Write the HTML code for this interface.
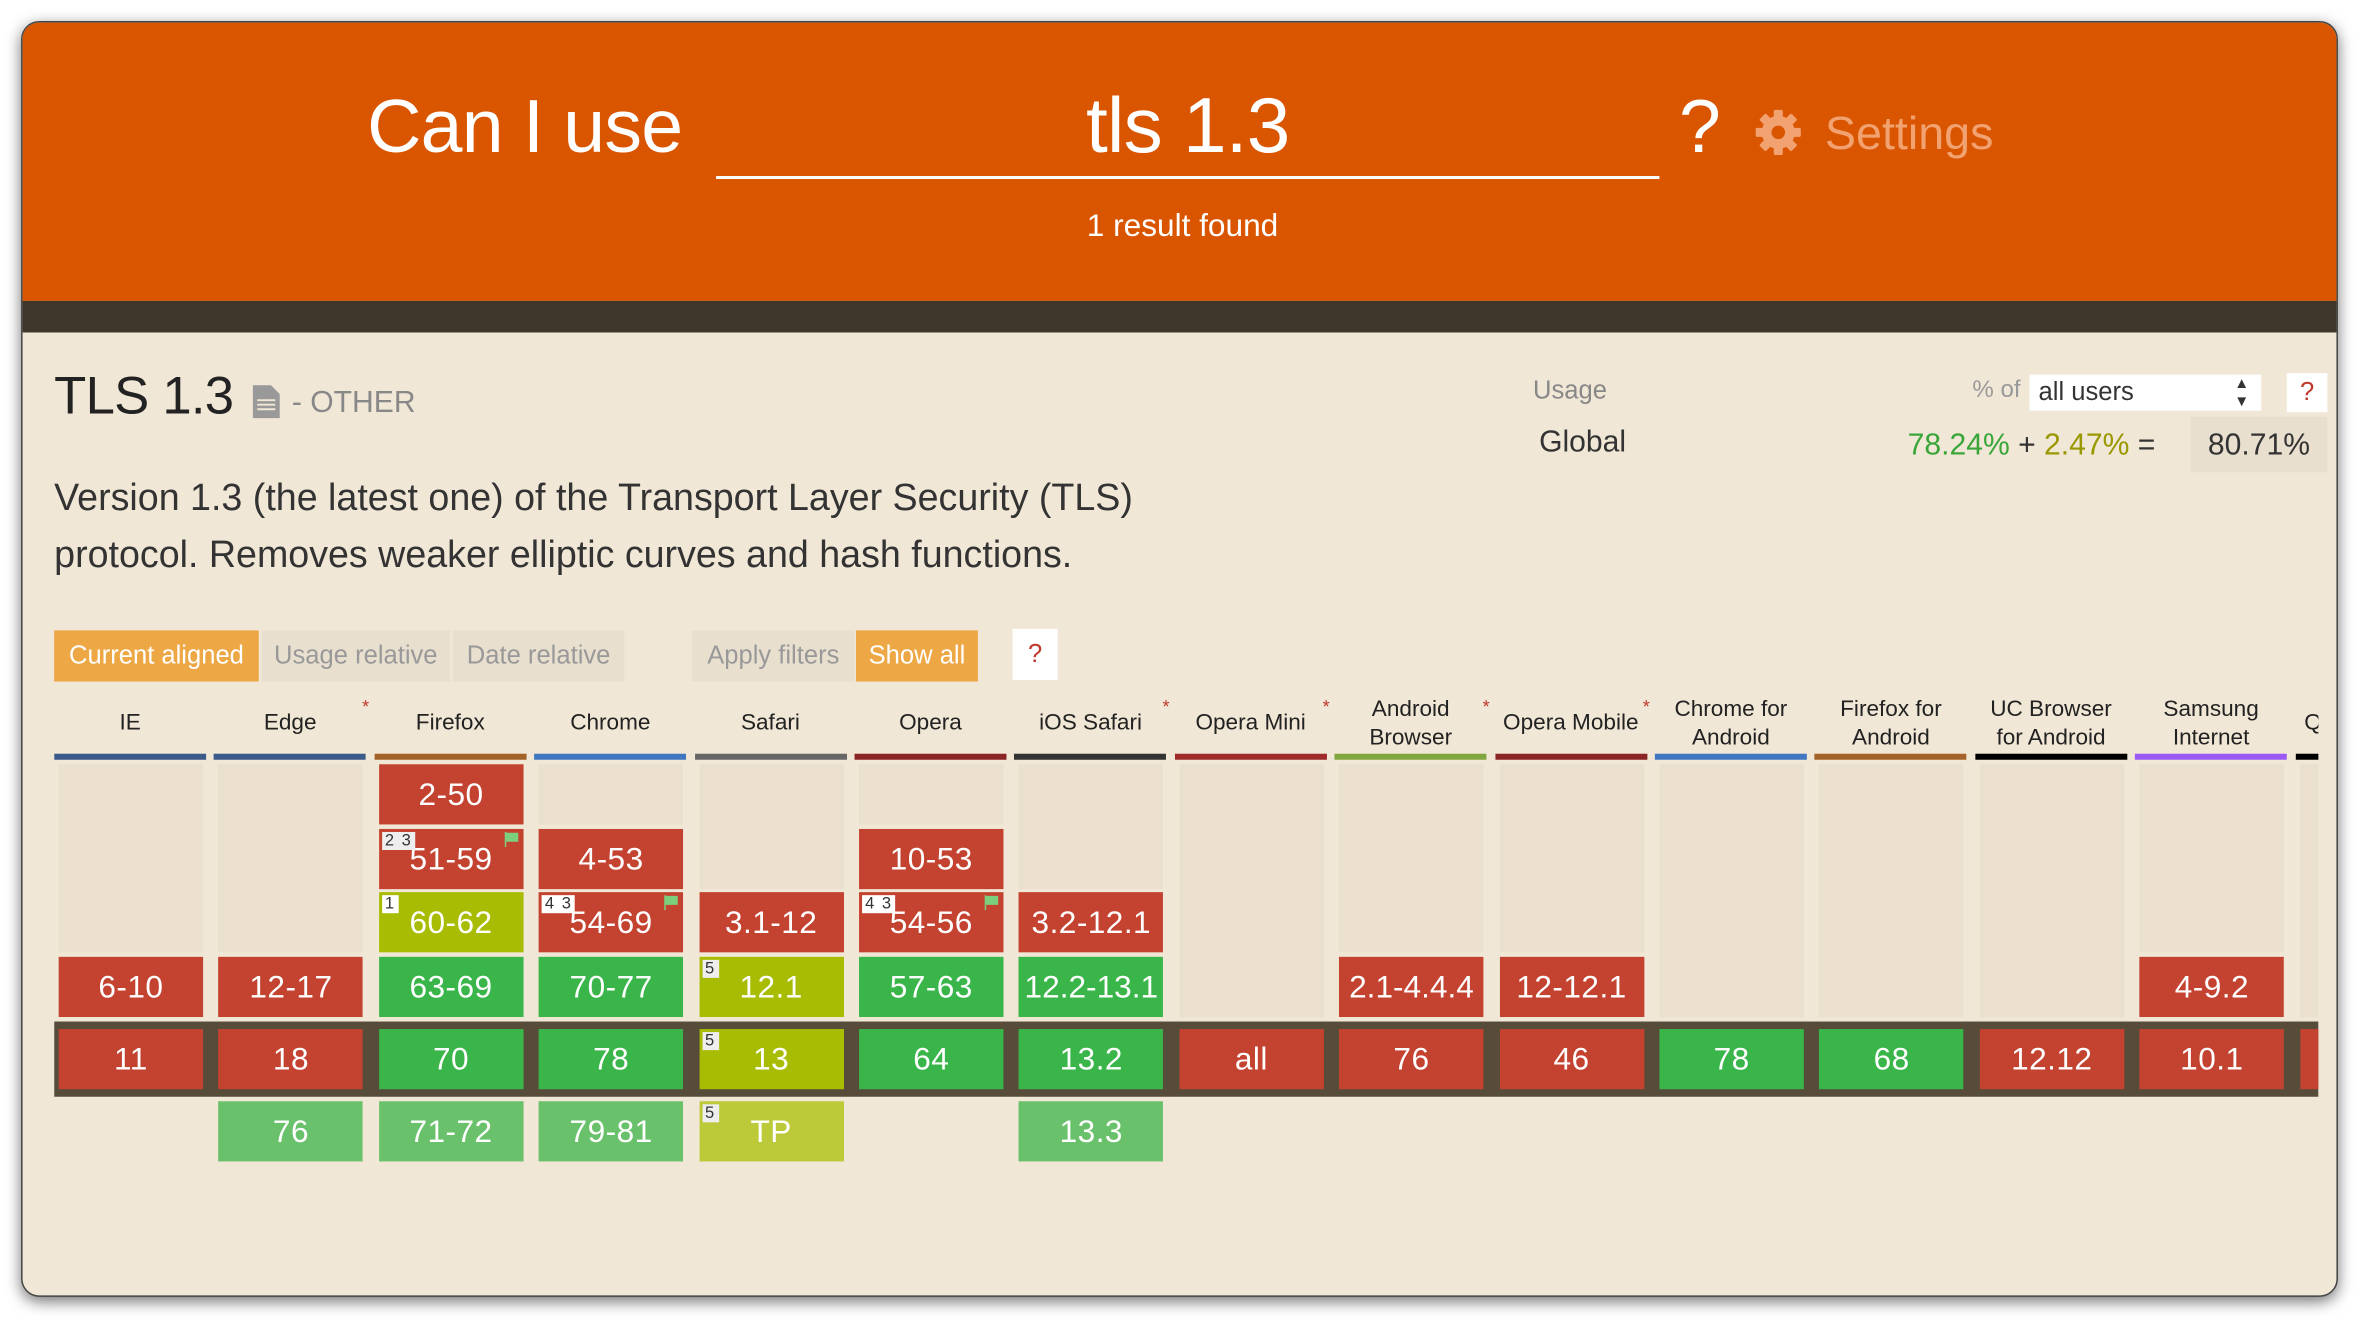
<!DOCTYPE html>
<html><head><meta charset="utf-8"><style>
*{margin:0;padding:0;box-sizing:border-box}
html,body{width:2359px;height:1334px;overflow:hidden;background:#fff;font-family:"Liberation Sans",sans-serif}
#w{position:absolute;left:0;top:0;width:1568px;height:887px;transform:scale(1.50446);transform-origin:0 0}
#card{position:absolute;left:14px;top:14px;width:1540px;height:848px;border-radius:12px;overflow:hidden;background:#f1e7d6;box-shadow:0 3px 10px rgba(0,0,0,.55);border:1px solid #444}
.a{position:absolute;white-space:nowrap}
#hd{position:absolute;left:0;top:0;width:1540px;height:185px;background:#da5500}
#band{position:absolute;left:0;top:185px;width:1540px;height:21px;background:#3e3629}
#content{position:absolute;left:21px;top:0;width:1505px;height:848px;overflow:hidden}
.col{position:absolute;top:0;width:101px;height:848px}
.h{position:absolute;left:0;width:101px;text-align:center;font-size:15px;color:#222;line-height:19px}
.bar{position:absolute;left:0;top:486px;width:101px;height:4px}
.e{position:absolute;left:3px;top:493px;width:96px;background:#eae0cd}
.c{position:absolute;left:3px;width:96px;height:40px;color:#fff;font-size:21px;text-align:center;line-height:42px;letter-spacing:.3px}
.r1{top:493px}.r2{top:536px}.r3{top:578px}.r4{top:621px}.cu{top:669px}.fu{top:717px}
.n{background:#c44230}.y{background:#39b54a}.p{background:#a8bc03}.fy{background:#6ac16b}.fp{background:#bcca3a}
.ast{position:absolute;top:448px;right:-2px;color:#c0392b;font-size:12px}
.nt{position:absolute;left:2px;top:2px;background:#eee;color:#333;font-size:11px;line-height:12px;padding:0 2px;letter-spacing:1px}
.fl{position:absolute;right:3px;top:2px;width:10px;height:10px}
.btn{position:absolute;top:404px;height:34px;line-height:34px;font-size:17px;text-align:center}
</style></head><body><div id="w"><div id="card">
<div id="hd">
<div class="a" style="left:229px;top:38px;font-size:50px;letter-spacing:-.5px;color:#fff;line-height:62px">Can I use</div>
<div class="a" style="left:461px;top:102px;width:627px;height:2px;background:#fff"></div>
<div class="a" style="left:461px;top:38px;width:627px;text-align:center;font-size:52px;letter-spacing:-.5px;color:#fff;line-height:62px">tls 1.3</div>
<div class="a" style="left:1101px;top:38px;font-size:50px;color:#fff;line-height:62px">?</div>
<svg class="a" style="left:1151px;top:57px" width="32" height="32" viewBox="0 0 32 32"><g fill="#f2a270"><circle cx="16" cy="16" r="11"/><rect x="13" y="1" width="6" height="30" rx="1"/><rect x="1" y="13" width="30" height="6" rx="1"/><rect x="13" y="1" width="6" height="30" rx="1" transform="rotate(45 16 16)"/><rect x="13" y="1" width="6" height="30" rx="1" transform="rotate(-45 16 16)"/></g><circle cx="16" cy="16" r="4.5" fill="#da5500"/></svg>
<div class="a" style="left:1198px;top:53px;font-size:31px;color:#f2a270;line-height:42px">Settings</div>
<div class="a" style="left:461px;top:122px;width:620px;text-align:center;font-size:21px;color:#fff;line-height:28px">1 result found</div>
</div>
<div id="band"></div>
<div class="a" style="left:21px;top:226px;font-size:35px;letter-spacing:-.5px;color:#222;line-height:46px">TLS 1.3</div>
<svg class="a" style="left:153px;top:241px" width="18" height="22" viewBox="0 0 18 22"><path d="M0 0h12l6 6v16H0z" fill="#999"/><path d="M3 10h12M3 13h12M3 16h12" stroke="#f1e7d6" stroke-width="1.3"/></svg>
<div class="a" style="left:179px;top:240px;font-size:20px;color:#888;line-height:26px">- OTHER</div>
<div class="a" style="left:21px;top:297px;font-size:25px;color:#333;line-height:38px">Version 1.3 (the latest one) of the Transport Layer Security (TLS)<br>protocol. Removes weaker elliptic curves and hash functions.</div>
<div class="a" style="left:1004px;top:235px;font-size:17px;color:#888">Usage</div>
<div class="a" style="left:1296px;top:236px;font-size:16px;color:#999">% of</div>
<div class="a" style="left:1334px;top:234px;width:154px;height:24px;background:#fff;font-size:17px;color:#333;line-height:24px;padding-left:6px">all users<span style="position:absolute;right:8px;top:1px;font-size:10px;line-height:12px">▲<br>▼</span></div>
<div class="a" style="left:1505px;top:233px;width:27px;height:26px;background:#fff;color:#c0392b;text-align:center;font-size:17px;line-height:26px">?</div>
<div class="a" style="left:1008px;top:268px;font-size:20px;color:#333">Global</div>
<div class="a" style="left:1253px;top:270px;font-size:20px;color:#333"><span style="color:#3aa63a">78.24%</span> + <span style="color:#9a9800">2.47%</span> =</div>
<div class="a" style="left:1441px;top:262px;width:91px;height:37px;background:#e8dfcf;font-size:20px;color:#333;line-height:38px;text-align:center">80.71%</div>
<div class="btn" style="left:21px;width:136px;background:#eda744;color:#fff">Current aligned</div>
<div class="btn" style="left:159px;width:125px;background:#e8dfcf;color:#999">Usage relative</div>
<div class="btn" style="left:286px;width:114px;background:#e8dfcf;color:#999">Date relative</div>
<div class="btn" style="left:445px;width:108px;background:#e8dfcf;color:#999">Apply filters</div>
<div class="btn" style="left:554px;width:81px;background:#eda744;color:#fff">Show all</div>
<div class="btn" style="left:658px;top:403px;width:30px;background:#fff;color:#c0392b">?</div>
<div id="content">
<div class="a" style="left:0;top:664px;width:1505px;height:50px;background:#574b3a"></div>

<div class="col" style="left:0px"><div class="h" style="top:456px">IE</div><div class="bar" style="background:#3a5a8a"></div><div class="e" style="height:125px"></div><div class="c r4 n">6-10</div><div class="c cu n">11</div></div>

<div class="col" style="left:106.4px"><div class="h" style="top:456px">Edge</div><span class="ast">*</span><div class="bar" style="background:#3a5a8a"></div><div class="e" style="height:125px"></div><div class="c r4 n">12-17</div><div class="c cu n">18</div><div class="c fu fy">76</div></div>

<div class="col" style="left:212.8px"><div class="h" style="top:456px">Firefox</div><div class="bar" style="background:#a36227"></div><div class="c r1 n">2-50</div><div class="c r2 n"><span class="nt">2 3</span><svg class="fl" viewBox="0 0 10 10"><path d="M1 0v10M1 1h8v5H1" fill="#7ccf7c" stroke="#7ccf7c"/></svg>51-59</div><div class="c r3 p"><span class="nt" style="background:#fff">1</span>60-62</div><div class="c r4 y">63-69</div><div class="c cu y">70</div><div class="c fu fy">71-72</div></div>

<div class="col" style="left:319.2px"><div class="h" style="top:456px">Chrome</div><div class="bar" style="background:#4077c0"></div><div class="e" style="height:40px"></div><div class="c r2 n">4-53</div><div class="c r3 n"><span class="nt" style="background:#fff">4 3</span><svg class="fl" viewBox="0 0 10 10"><path d="M1 0v10M1 1h8v5H1" fill="#7ccf7c" stroke="#7ccf7c"/></svg>54-69</div><div class="c r4 y">70-77</div><div class="c cu y">78</div><div class="c fu fy">79-81</div></div>

<div class="col" style="left:425.6px"><div class="h" style="top:456px">Safari</div><div class="bar" style="background:#666"></div><div class="e" style="height:83px"></div><div class="c r3 n">3.1-12</div><div class="c r4 p"><span class="nt">5</span>12.1</div><div class="c cu p"><span class="nt">5</span>13</div><div class="c fu fp"><span class="nt">5</span>TP</div></div>

<div class="col" style="left:532px"><div class="h" style="top:456px">Opera</div><div class="bar" style="background:#8b2525"></div><div class="e" style="height:40px"></div><div class="c r2 n">10-53</div><div class="c r3 n"><span class="nt" style="background:#fff">4 3</span><svg class="fl" viewBox="0 0 10 10"><path d="M1 0v10M1 1h8v5H1" fill="#7ccf7c" stroke="#7ccf7c"/></svg>54-56</div><div class="c r4 y">57-63</div><div class="c cu y">64</div></div>

<div class="col" style="left:638.4px"><div class="h" style="top:456px">iOS Safari</div><span class="ast">*</span><div class="bar" style="background:#333"></div><div class="e" style="height:83px"></div><div class="c r3 n">3.2-12.1</div><div class="c r4 y" style="letter-spacing:0">12.2-13.1</div><div class="c cu y">13.2</div><div class="c fu fy">13.3</div></div>

<div class="col" style="left:744.8px"><div class="h" style="top:456px">Opera Mini</div><span class="ast">*</span><div class="bar" style="background:#9e2a2a"></div><div class="e" style="height:168px"></div><div class="c cu n">all</div></div>

<div class="col" style="left:851.2px"><div class="h" style="top:447px">Android<br>Browser</div><span class="ast">*</span><div class="bar" style="background:#80a63e"></div><div class="e" style="height:125px"></div><div class="c r4 n" style="letter-spacing:0">2.1-4.4.4</div><div class="c cu n">76</div></div>

<div class="col" style="left:957.6px"><div class="h" style="top:456px">Opera Mobile</div><span class="ast">*</span><div class="bar" style="background:#8b2525"></div><div class="e" style="height:125px"></div><div class="c r4 n">12-12.1</div><div class="c cu n">46</div></div>

<div class="col" style="left:1064px"><div class="h" style="top:447px">Chrome for<br>Android</div><div class="bar" style="background:#4077c0"></div><div class="e" style="height:168px"></div><div class="c cu y">78</div></div>

<div class="col" style="left:1170.4px"><div class="h" style="top:447px">Firefox for<br>Android</div><div class="bar" style="background:#a36227"></div><div class="e" style="height:168px"></div><div class="c cu y">68</div></div>

<div class="col" style="left:1276.8px"><div class="h" style="top:447px">UC Browser<br>for Android</div><div class="bar" style="background:#000"></div><div class="e" style="height:168px"></div><div class="c cu n">12.12</div></div>

<div class="col" style="left:1383.2px"><div class="h" style="top:447px">Samsung<br>Internet</div><div class="bar" style="background:#9b59f5"></div><div class="e" style="height:125px"></div><div class="c r4 n">4-9.2</div><div class="c cu n">10.1</div></div>

<div class="col" style="left:1489.6px"><div class="h" style="top:456px;text-align:left;padding-left:6px">QQ</div><div class="bar" style="background:#000"></div><div class="e" style="height:168px"></div><div class="c cu n"></div></div>
</div>
</div></div></body></html>
